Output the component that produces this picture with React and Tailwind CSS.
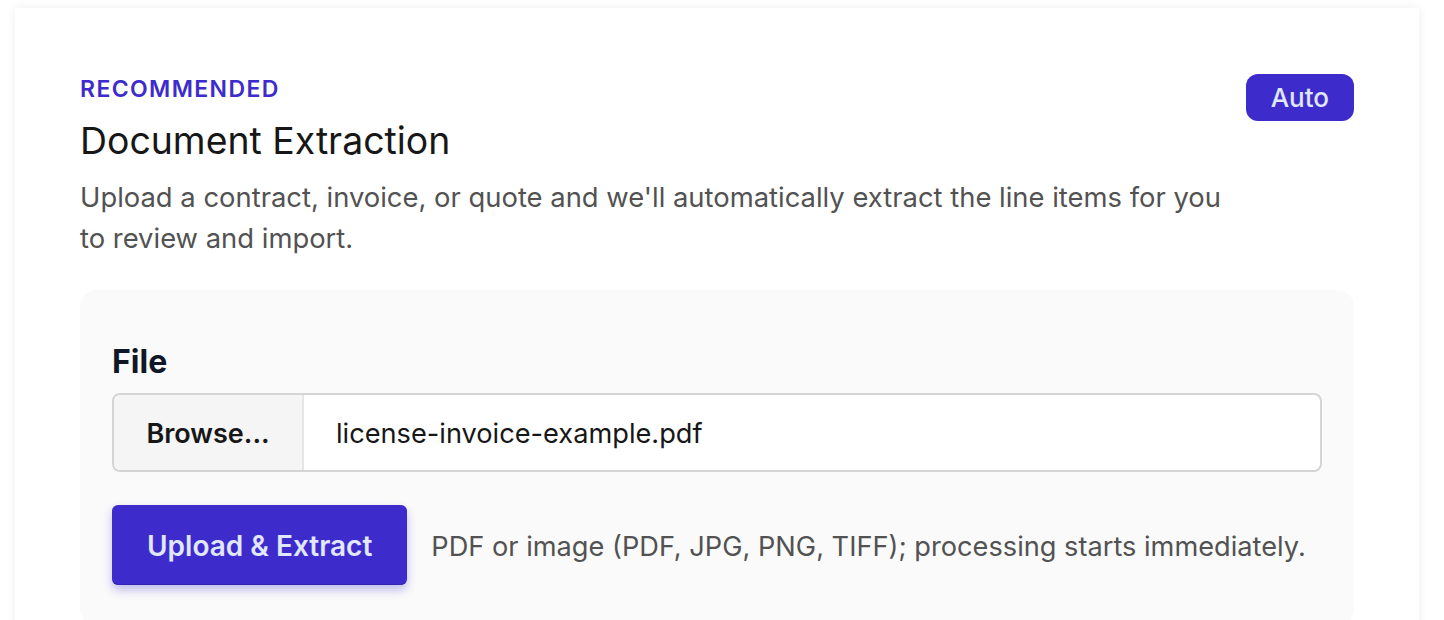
import React from "react";

const App = () => {
  return (
    <div
      className="min-h-screen bg-white pt-2 pl-[15px]"
      style={{ fontFamily: "Inter, 'Noto Sans', sans-serif" }}
    >
      <div className="w-[1404px] bg-white shadow-[0_0_10px_rgba(0,0,0,0.07)] px-[65px] pt-[66px] pb-10">
        <div className="flex items-start justify-between">
          <div>
            <div className="text-[23px] leading-[30px] font-semibold tracking-[0.06em] text-[#3d2bcb]">
              RECOMMENDED
            </div>
            <h1 className="mt-3 text-[37.4px] leading-[50px] font-normal text-neutral-900">
              Document Extraction
            </h1>
          </div>
          <span className="inline-flex h-[47px] items-center rounded-xl bg-[#3d2bcb] px-[25px] text-[26px] font-medium text-indigo-100">
            Auto
          </span>
        </div>
        <p className="mt-[11px] max-w-[1170px] text-[27.4px] leading-[41px] text-neutral-600">
          Upload a contract, invoice, or quote and we'll automatically extract the line items for you
          to review and import.
        </p>

        <div className="mt-[31px] rounded-2xl bg-neutral-50 px-8 pt-[52px] pb-10">
          <label className="block text-[32px] leading-10 font-bold text-gray-900">File</label>
          <div className="mt-[11px] flex h-[79px] overflow-hidden rounded-lg border-2 border-neutral-300 bg-white">
            <div className="flex w-[190px] items-center justify-center border-r-2 border-neutral-200 bg-neutral-100 pt-1 text-[27px] font-semibold text-neutral-900">
              Browse...
            </div>
            <div className="flex items-center pl-8 pt-1 text-[27.2px] text-neutral-900">
              license-invoice-example.pdf
            </div>
          </div>
          <div className="mt-[33px] flex items-center gap-6">
            <button className="h-[80px] rounded-md border-b border-[#3424b0] bg-[#3d2bcb] px-[35px] pt-0.5 text-[28px] font-semibold text-indigo-100 shadow-[0_5px_10px_rgba(61,43,203,0.3)]">
              Upload &amp; Extract
            </button>
            <span className="pt-1 text-[27.2px] text-neutral-600">
              PDF or image (PDF, JPG, PNG, TIFF); processing starts immediately.
            </span>
          </div>
        </div>
      </div>
    </div>
  );
};

export default App;
